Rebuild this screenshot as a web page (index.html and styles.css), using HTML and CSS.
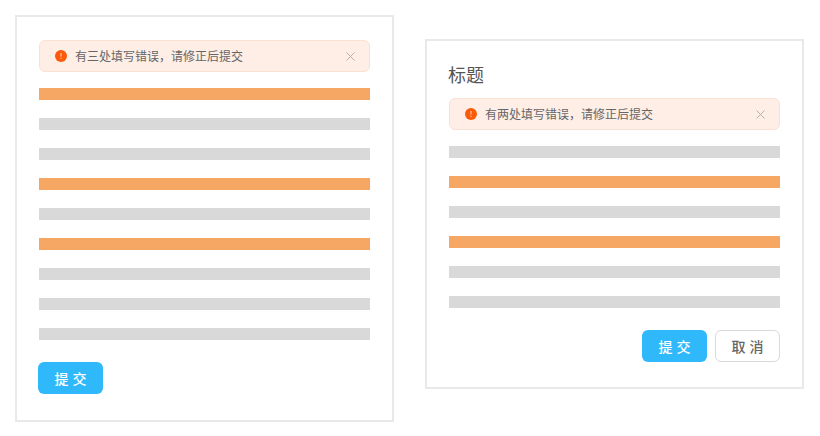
FILE: index.html
```html
<!DOCTYPE html>
<html lang="zh-CN">
<head>
    <meta charset="UTF-8">
    <meta name="viewport" content="width=device-width, initial-scale=1.0">
    <title>表单错误提示</title>
    <link rel="stylesheet" href="styles.css">
</head>
<body>
    <div class="card card-left">
        <div class="alert">
            <svg class="alert-icon" width="12" height="12" viewBox="0 0 12 12"><circle cx="6" cy="6" r="6" fill="#fa5a0a"/><rect x="5.5" y="3" width="1" height="3.6" fill="#ffd9c4"/><rect x="5.5" y="7.8" width="1" height="1" fill="#ffd9c4"/></svg>
            <span class="alert-text">有三处填写错误，请修正后提交</span>
            <svg class="alert-close" width="9" height="9" viewBox="0 0 9 9"><path d="M0.5 0.5L8.5 8.5M8.5 0.5L0.5 8.5" stroke="#b5b0ad" stroke-width="1" fill="none"/></svg>
        </div>
        <div class="bars">
            <div class="bar bar-error"></div>
            <div class="bar"></div>
            <div class="bar"></div>
            <div class="bar bar-error"></div>
            <div class="bar"></div>
            <div class="bar bar-error"></div>
            <div class="bar"></div>
            <div class="bar"></div>
            <div class="bar"></div>
        </div>
        <div class="actions-left">
            <button class="btn btn-primary">提 交</button>
        </div>
    </div>

    <div class="card card-right">
        <h2 class="card-title">标题</h2>
        <div class="alert">
            <svg class="alert-icon" width="12" height="12" viewBox="0 0 12 12"><circle cx="6" cy="6" r="6" fill="#fa5a0a"/><rect x="5.5" y="3" width="1" height="3.6" fill="#ffd9c4"/><rect x="5.5" y="7.8" width="1" height="1" fill="#ffd9c4"/></svg>
            <span class="alert-text">有两处填写错误，请修正后提交</span>
            <svg class="alert-close" width="9" height="9" viewBox="0 0 9 9"><path d="M0.5 0.5L8.5 8.5M8.5 0.5L0.5 8.5" stroke="#b5b0ad" stroke-width="1" fill="none"/></svg>
        </div>
        <div class="bars">
            <div class="bar"></div>
            <div class="bar bar-error"></div>
            <div class="bar"></div>
            <div class="bar bar-error"></div>
            <div class="bar"></div>
            <div class="bar"></div>
        </div>
        <div class="actions-right">
            <button class="btn btn-primary">提 交</button>
            <button class="btn btn-default">取 消</button>
        </div>
    </div>
</body>
</html>
```

FILE: styles.css
```css
body {
    font-family: "Liberation Sans", "Noto Sans CJK SC", sans-serif;
    background-color: #fff;
    margin: 0;
    padding: 15px;
    display: flex;
    align-items: flex-start;
    gap: 31px;
}
.card {
    box-sizing: border-box;
    width: 379px;
    border: 2px solid #e9e9e9;
    background-color: #fff;
    padding: 0 22px;
}
.card-left {
    height: 407px;
    padding-top: 23px;
}
.card-right {
    height: 350px;
    margin-top: 24px;
    padding-top: 23px;
}
.card-title {
    font-size: 18px;
    font-weight: normal;
    line-height: 24px;
    height: 34px;
    margin: 0 0 0 -1px;
    color: #555;
}
.alert {
    box-sizing: border-box;
    height: 32px;
    display: flex;
    align-items: center;
    padding: 0 15px;
    background-color: #feeee6;
    border: 1px solid #fde0d2;
    border-radius: 6px;
}
.alert-icon {
    flex-shrink: 0;
}
.alert-text {
    flex: 1;
    margin-left: 8px;
    padding-bottom: 2px;
    font-size: 12px;
    color: #666;
}
.alert-close {
    margin-right: -1px;
}
.bars {
    margin-top: 16px;
    display: flex;
    flex-direction: column;
    gap: 18px;
}
.bar {
    height: 12px;
    background-color: #d9d9d9;
}
.bar-error {
    background-color: #f5a763;
}
.actions-left {
    margin-top: 22px;
    margin-left: -1px;
}
.actions-right {
    margin-top: 22px;
    display: flex;
    justify-content: flex-end;
    gap: 8px;
}
.btn {
    box-sizing: border-box;
    width: 65px;
    height: 32px;
    padding: 0;
    font-family: inherit;
    font-size: 14px;
    font-weight: 500;
    border-radius: 6px;
    cursor: pointer;
}
.btn-primary {
    background-color: #2fb9fb;
    color: #fff;
    border: none;
}
.btn-default {
    background-color: #fff;
    color: #666;
    border: 1px solid #d9d9d9;
}
```
